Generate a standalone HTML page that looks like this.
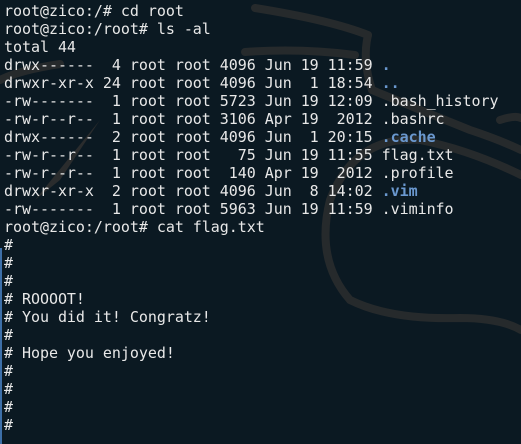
<!DOCTYPE html>
<html><head><style>
html,body{margin:0;padding:0;}
body{width:521px;height:444px;overflow:hidden;background:#0b1922;position:relative;}
svg{position:absolute;left:0;top:0;}
pre{position:absolute;left:4px;top:2px;margin:0;font-family:"DejaVu Sans Mono","Liberation Mono",monospace;font-size:15px;line-height:18px;color:#e8e8e8;letter-spacing:-0.04px;}
.b{color:#6a98cf;font-weight:bold;}
.edge{position:absolute;left:0;top:248px;width:2px;height:196px;background:#3d6fa8;}
</style></head><body>
<svg width="521" height="444" viewBox="0 0 521 444">
<g fill="none" stroke="#262a2c" stroke-width="8" stroke-linecap="round">
<path d="M255 8 Q330 20 368 35"/>
<path d="M245 52 Q300 48 355 55"/>
<path d="M368 35 Q362 60 372 90"/>
<path d="M372 90 Q420 110 470 130 Q500 140 521 150"/>
<path d="M500 120 Q515 115 521 118"/>
<path d="M521 175 Q470 150 420 140 Q355 135 330 200 Q315 260 350 300 Q390 320 460 318 Q500 318 521 330"/>
<path d="M0 80 Q20 70 60 64"/>
</g>
<path d="M35 200 L100 120 L60 180 Z" fill="#2a2c2d"/>
</svg>
<div class="edge"></div>
<pre>root@zico:/# cd root
root@zico:/root# ls -al
total 44
drwx------  4 root root 4096 Jun 19 11:59 <span class="b">.</span>
drwxr-xr-x 24 root root 4096 Jun  1 18:54 <span class="b">..</span>
-rw-------  1 root root 5723 Jun 19 12:09 .bash_history
-rw-r--r--  1 root root 3106 Apr 19  2012 .bashrc
drwx------  2 root root 4096 Jun  1 20:15 <span class="b">.cache</span>
-rw-r--r--  1 root root   75 Jun 19 11:55 flag.txt
-rw-r--r--  1 root root  140 Apr 19  2012 .profile
drwxr-xr-x  2 root root 4096 Jun  8 14:02 <span class="b">.vim</span>
-rw-------  1 root root 5963 Jun 19 11:59 .viminfo
root@zico:/root# cat flag.txt
#
#
#
# ROOOOT!
# You did it! Congratz!
#
# Hope you enjoyed!
#
#
#
#</pre>
</body></html>
